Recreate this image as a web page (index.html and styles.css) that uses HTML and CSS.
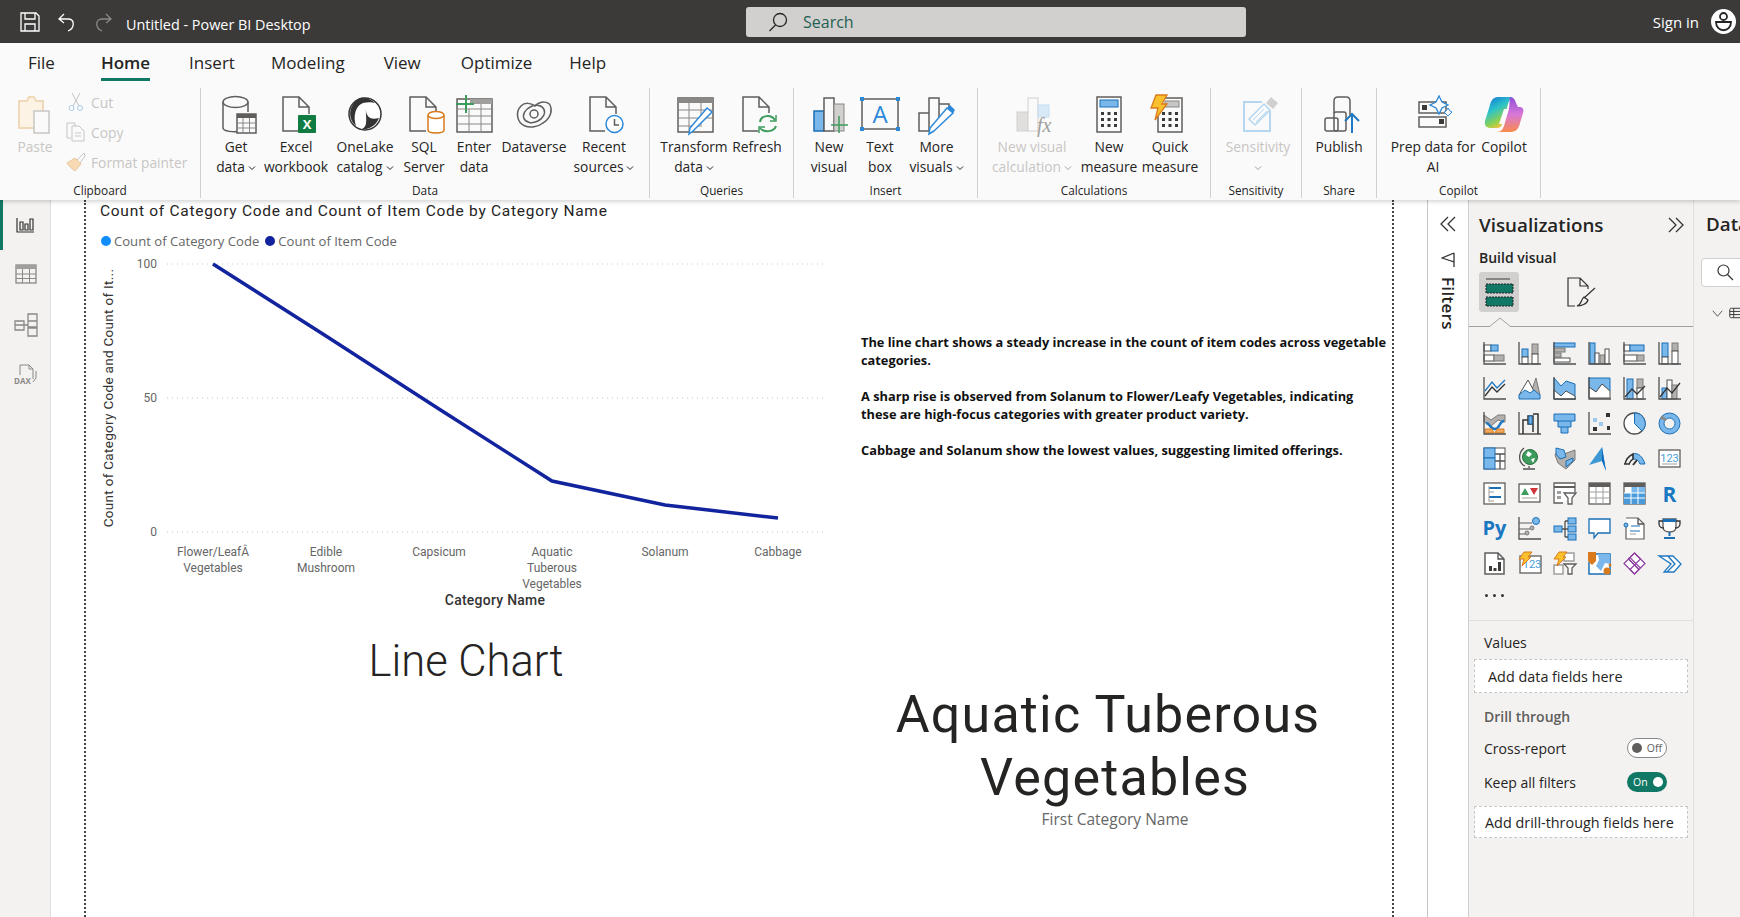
FILE: index.html
```html
<!DOCTYPE html>
<html lang="en">
<head>
    <meta charset="UTF-8">
    <title>Untitled - Power BI Desktop</title>
    <link rel="stylesheet" href="styles.css">
</head>
<body>
    <!-- Title bar -->
    <header class="titlebar">
        <div class="quick-tools">
            <svg class="qt" width="22" height="20" viewBox="0 0 22 20"><path class="tb" d="M2 1H17L20 4V19H2ZM6 1V7H16V1M6 19V12H16V19"/></svg>
            <svg class="qt" width="20" height="20" viewBox="0 0 20 20"><path class="tb" d="M7 2L2 7L7 11M2 7H11C18 7 18 16 11 19"/></svg>
            <svg class="qt dim" width="20" height="20" viewBox="0 0 20 20"><path class="tb" d="M13 2L18 7L13 11M18 7H9C2 7 2 16 9 19"/></svg>
            <span class="doc-title">Untitled - Power BI Desktop</span>
        </div>
        <div class="search-box">
            <svg width="20" height="20" viewBox="0 0 20 20"><circle class="tk" cx="12" cy="8" r="6.5"/><path class="tk" d="M7.5 13L1.5 19"/></svg>
            <span>Search</span>
        </div>
        <div class="account">
            <span>Sign in</span>
            <svg width="25" height="25" viewBox="0 0 25 25"><circle cx="12.500" cy="12.500" r="12.500" fill="#fff"/><circle class="av" cx="12.500" cy="7.500" r="3.500"/><path class="av" d="M5 13H20C20 24 5 24 5 13Z"/></svg>
        </div>
    </header>

    <!-- Ribbon -->
    <section class="ribbon">
        <nav class="tabs">
            <span class="tab tab-file">File</span>
            <span class="tab tab-home active">Home</span>
            <span class="tab tab-insert">Insert</span>
            <span class="tab tab-modeling">Modeling</span>
            <span class="tab tab-view">View</span>
            <span class="tab tab-optimize">Optimize</span>
            <span class="tab tab-help">Help</span>
        </nav>
        <div class="groups">
            <div class="group g-clipboard">
                <div class="items">
                    <div class="item disabled">
                        <svg class="rb" viewBox="0 0 44 40"><path d="M6 6H14L16 2H21L23 6H30V33H6Z" fill="#fdf3e4" stroke="#f0d9b8" stroke-width="2"/><rect x="21" y="16" width="15" height="22" fill="#fafafa" stroke="#c8c6c4" stroke-width="1.500"/></svg>
                        <span class="lbl">Paste</span>
                    </div>
                    <div class="small-col">
                        <div class="small"><svg width="18" height="20" viewBox="0 0 18 20"><path d="M5 1L12 14M13 1L6 14" stroke="#c8c6c4" fill="none"/><circle cx="4.500" cy="16" r="2.500" fill="none" stroke="#a9cce8"/><circle cx="13" cy="16" r="2.500" fill="none" stroke="#a9cce8"/></svg><span>Cut</span></div>
                        <div class="small"><svg width="20" height="20" viewBox="0 0 20 20"><path d="M1 1H9V4M1 1V16H5" stroke="#c8c6c4" fill="none"/><path d="M6 4H13L18 9V19H6Z" stroke="#c8c6c4" fill="#fafafa"/><path d="M9 11H15M9 14H15" stroke="#c8c6c4"/></svg><span>Copy</span></div>
                        <div class="small"><svg width="20" height="20" viewBox="0 0 20 20"><path d="M18 1L11 8L14 11L19 4Z" fill="none" stroke="#c8c6c4"/><path d="M9 6L15 12L9 19C6 17 3 14 1 11Z" fill="#f7d9b4" stroke="#e8c79c"/></svg><span>Format painter</span></div>
                    </div>
                </div>
                <div class="group-name">Clipboard</div>
            </div>

            <div class="group g-data">
                <div class="items">
                    <div class="item">
                        <svg class="rb" viewBox="0 0 44 40"><path class="ln" d="M9 7V33C9 36 20 38 26 36M34 7V17"/><ellipse class="ln" cx="21.500" cy="7" rx="12.500" ry="5.500"/><rect class="ln wf" x="23" y="19" width="19" height="19"/><rect x="23" y="19" width="19" height="4" fill="#605e5c"/><path class="th" d="M23 28H42M23 33H42M29 23V38M35.500 23V38"/></svg>
                        <span class="lbl">Get<br>data<svg class="caret" viewBox="0 0 8 8"><path d="M1 2.500L4 5.500L7 2.500"/></svg></span>
                    </div>
                    <div class="item">
                        <svg class="rb" viewBox="0 0 44 40"><path class="ln" d="M26 36H9V2H25L35 12V19M25 2V12H35"/><rect x="24" y="20" width="18" height="18" rx="1" fill="#107c41"/><text class="xl" x="33" y="34" text-anchor="middle">X</text></svg>
                        <span class="lbl">Excel<br>workbook</span>
                    </div>
                    <div class="item">
                        <svg class="rb" viewBox="0 0 44 40"><circle cx="22" cy="19" r="16" fill="#fff" stroke="#333" stroke-width="1.500"/><path d="M17 3C7 8 3 22 13 31C10 22 12 11 20 8C24 7 29 7 32 8C28 4 22 2 17 3Z" fill="#333"/><path d="M23 11C22 19 25 26 36 23C33 31 25 35 19 34C26 31 22 20 23 11Z" fill="#333"/></svg>
                        <span class="lbl">OneLake<br>catalog<svg class="caret" viewBox="0 0 8 8"><path d="M1 2.500L4 5.500L7 2.500"/></svg></span>
                    </div>
                    <div class="item">
                        <svg class="rb" viewBox="0 0 44 40"><path class="ln" d="M24 36H8V2H24L34 12V16M24 2V12H34"/><path d="M26 20V35C26 39 42 39 42 35V20" fill="#fff" stroke="#d97b1c" stroke-width="1.500"/><ellipse cx="34" cy="20" rx="8" ry="3.500" fill="#fff" stroke="#d97b1c" stroke-width="1.500"/></svg>
                        <span class="lbl">SQL<br>Server</span>
                    </div>
                    <div class="item">
                        <svg class="rb" viewBox="0 0 44 40"><rect class="ln" x="5" y="4" width="35" height="33"/><rect x="18" y="4" width="22" height="5" fill="#a19f9d"/><path class="th" d="M5 14H40M5 21H40M5 29H40M17 14V37M29 9V37"/><path d="M14 0V18M4 9H22" stroke="#3d9c5d" stroke-width="2"/></svg>
                        <span class="lbl">Enter<br>data</span>
                    </div>
                    <div class="item">
                        <svg class="rb" viewBox="0 0 44 40"><path class="ln" d="M13 31C5 28 3 17 9 11C13 7 19 8 23 11C28 6 38 5 39 13C40 20 35 26 31 28C26 32 18 33 13 31Z"/><ellipse class="ln" cx="22" cy="19" rx="11" ry="8" transform="rotate(-25 22 19)"/><circle class="ln" cx="22" cy="19" r="4"/></svg>
                        <span class="lbl">Dataverse</span>
                    </div>
                    <div class="item">
                        <svg class="rb" viewBox="0 0 44 40"><path class="ln" d="M23 36H8V2H24L34 12V19M24 2V12H34"/><circle cx="32.500" cy="29" r="8.500" fill="#fff" stroke="#2b88d8" stroke-width="1.500"/><path class="ln" d="M32.500 24V30H37"/></svg>
                        <span class="lbl">Recent<br>sources<svg class="caret" viewBox="0 0 8 8"><path d="M1 2.500L4 5.500L7 2.500"/></svg></span>
                    </div>
                </div>
                <div class="group-name">Data</div>
            </div>

            <div class="group g-queries">
                <div class="items">
                    <div class="item">
                        <svg class="rb" viewBox="0 0 44 40"><rect class="ln" x="6" y="3" width="35" height="34"/><rect x="6" y="3" width="35" height="5" fill="#8a8886"/><path class="th" d="M6 15H41M6 23H41M6 31H30M17 8V37M29 8V30"/><path d="M21 36L17 39L18 33L35 13L40 17Z" fill="#fff" stroke="#2b88d8" stroke-width="1.500"/></svg>
                        <span class="lbl">Transform<br>data<svg class="caret" viewBox="0 0 8 8"><path d="M1 2.500L4 5.500L7 2.500"/></svg></span>
                    </div>
                    <div class="item">
                        <svg class="rb" viewBox="0 0 44 40"><path class="ln" d="M23 36H8V2H24L34 12V18M24 2V12H34"/><path d="M25 27C26 20 36 19 40 25M41 31C39 37 29 38 25 33" fill="none" stroke="#3d9c5d" stroke-width="2"/><path d="M41 20V26H35M24 38V32H30" fill="none" stroke="#3d9c5d" stroke-width="1.500"/></svg>
                        <span class="lbl">Refresh</span>
                    </div>
                </div>
                <div class="group-name">Queries</div>
            </div>

            <div class="group g-insert">
                <div class="items">
                    <div class="item">
                        <svg class="rb" viewBox="0 0 44 40"><rect x="7" y="16" width="10" height="20" fill="#7ab8ec" stroke="#1a6fb5" stroke-width="1.500"/><rect class="ln wf" x="17" y="3" width="10" height="33"/><rect x="27" y="9" width="10" height="27" fill="#d2d0ce" stroke="#8a8886"/><path d="M32 21V38M24 30H41" stroke="#3d9c5d" stroke-width="1.500"/></svg>
                        <span class="lbl">New<br>visual</span>
                    </div>
                    <div class="item">
                        <svg class="rb" viewBox="0 0 44 40"><rect class="ln" x="4" y="4" width="36" height="30"/><path d="M2 2H6V6H2ZM38 2H42V6H38ZM2 32H6V36H2ZM38 32H42V36H38Z" fill="#2b88d8"/><text class="a-glyph" x="22" y="28" text-anchor="middle">A</text></svg>
                        <span class="lbl">Text<br>box</span>
                    </div>
                    <div class="item">
                        <svg class="rb" viewBox="0 0 44 40"><path class="ln" d="M14 36H4V18H14ZM14 36V3H24V25M24 9H34V20"/><path d="M19 36L14 39L15 33L32 13L38 18Z" fill="#fff" stroke="#2b88d8" stroke-width="1.500"/><path d="M32 13L38 18L40 15L35 10Z" fill="#2b88d8"/></svg>
                        <span class="lbl">More<br>visuals<svg class="caret" viewBox="0 0 8 8"><path d="M1 2.500L4 5.500L7 2.500"/></svg></span>
                    </div>
                </div>
                <div class="group-name">Insert</div>
            </div>

            <div class="group g-calc">
                <div class="items">
                    <div class="item disabled">
                        <svg class="rb" viewBox="0 0 44 40"><rect x="7" y="17" width="11" height="19" fill="#e1dfdd" stroke="#d2d0ce"/><rect x="18" y="3" width="10" height="33" fill="#fafafa" stroke="#d2d0ce"/><rect x="28" y="10" width="11" height="12" fill="#d8e9f7" stroke="#c4dcf0"/><text class="fx" x="27" y="37">fx</text></svg>
                        <span class="lbl">New visual<br>calculation<svg class="caret" viewBox="0 0 8 8"><path d="M1 2.500L4 5.500L7 2.500"/></svg></span>
                    </div>
                    <div class="item">
                        <svg class="rb" viewBox="0 0 44 40"><rect class="ln wf" x="10" y="2" width="24" height="35"/><rect x="13" y="5" width="18" height="7" fill="#7ab8ec" stroke="#1a6fb5"/><path d="M14 17h3v3h-3zM20.500 17h3v3h-3zM27 17h3v3h-3zM14 23h3v3h-3zM20.500 23h3v3h-3zM27 23h3v3h-3zM14 29h3v3h-3zM20.500 29h3v3h-3zM27 29h3v3h-3z" fill="#3b3a39"/></svg>
                        <span class="lbl">New<br>measure</span>
                    </div>
                    <div class="item">
                        <svg class="rb" viewBox="0 0 44 40"><rect class="ln wf" x="10" y="3" width="24" height="34"/><rect x="17" y="6" width="14" height="6" fill="#c8c6c4" stroke="#8a8886"/><path d="M14 17h3v3h-3zM20.500 17h3v3h-3zM27 17h3v3h-3zM14 23h3v3h-3zM20.500 23h3v3h-3zM27 23h3v3h-3zM14 29h3v3h-3zM20.500 29h3v3h-3zM27 29h3v3h-3z" fill="#3b3a39"/><path d="M8 0H19L14 9H19L7 25L10 13H3Z" fill="#fbc02d" stroke="#d97b1c" stroke-width="1.300"/></svg>
                        <span class="lbl">Quick<br>measure</span>
                    </div>
                </div>
                <div class="group-name">Calculations</div>
            </div>

            <div class="group g-sens">
                <div class="items">
                    <div class="item disabled">
                        <svg class="rb" viewBox="0 0 44 40"><path d="M26 7H8V36H34V16" fill="#fafafa" stroke="#b5d6ef" stroke-width="2"/><path d="M13 24L28 9L34 15L19 30Z" fill="#fafafa" stroke="#b5d6ef" stroke-width="1.500"/><path d="M17 25L28 14M20 27L31 16" stroke="#b5d6ef"/><path d="M30 8L35 2L42 8L37 14Z" fill="#d2d0ce"/></svg>
                        <span class="lbl">Sensitivity<br><svg class="caret solo" viewBox="0 0 8 8"><path d="M1 2.500L4 5.500L7 2.500"/></svg></span>
                    </div>
                </div>
                <div class="group-name">Sensitivity</div>
            </div>

            <div class="group g-share">
                <div class="items">
                    <div class="item">
                        <svg class="rb" viewBox="0 0 44 40"><path class="ln" d="M17 18V6C17 3 19 2 21 2H29C31 2 33 3 33 6V20" stroke-width="2"/><rect class="ln" x="8" y="23" width="13" height="13" rx="2" stroke-width="2"/><rect class="ln" x="17" y="17" width="12" height="19" rx="2" stroke-width="2" fill="#fafafa"/><path d="M35 38V19M28 26L35 19L42 26" fill="none" stroke="#1f78c1" stroke-width="2"/></svg>
                        <span class="lbl">Publish</span>
                    </div>
                </div>
                <div class="group-name">Share</div>
            </div>

            <div class="group g-copilot">
                <div class="items">
                    <div class="item">
                        <svg class="rb" viewBox="0 0 44 40"><rect class="ln" x="8" y="7" width="27" height="11"/><rect x="11" y="10" width="5" height="5" fill="#3b3a39"/><rect class="ln" x="8" y="22" width="27" height="10" stroke-width="1.500"/><rect x="28" y="24" width="5" height="5" fill="#3b3a39"/><path d="M28 1L31 7L37 10L31 13L28 19L25 13L19 10L25 7Z" fill="#fafafa" stroke="#2b88d8" stroke-width="1.300"/><path d="M37 13L39 16L41 17L39 19L37 21L35 19L33 17L35 16Z" fill="#fafafa" stroke="#2b88d8"/></svg>
                        <span class="lbl">Prep data for<br>AI</span>
                    </div>
                    <div class="item">
                        <svg class="rb copilot" viewBox="0 0 44 40">
                            <defs>
                                <linearGradient id="cpA" x1="0" y1="0" x2="0.500" y2="1"><stop offset="0" stop-color="#0f6cd8"/><stop offset="0.450" stop-color="#2cc3c9"/><stop offset="0.800" stop-color="#8fd14f"/><stop offset="1" stop-color="#f5c43c"/></linearGradient>
                                <linearGradient id="cpB" x1="0.500" y1="0" x2="0.500" y2="1"><stop offset="0" stop-color="#8f4fd8"/><stop offset="0.500" stop-color="#d878d8"/><stop offset="1" stop-color="#f98a4b"/></linearGradient>
                            </defs>
                            <path d="M27 2H16C11 2 9 6 8 10L3 26C2 31 5 33 9 33H15C19 33 20 30 21 27L26 9C27 6 28 3 31 2Z" fill="url(#cpA)"/>
                            <path d="M28 2C31 2 33 4 34 8L36 12H38C41 12 42 15 41 18L38 28C37 33 34 37 29 37H15C19 37 21 34 22 31L27 13C28 9 27 5 28 2Z" fill="url(#cpB)"/>
                            <path d="M22 14H27L22 29H17Z" fill="#fafafa"/>
                        </svg>
                        <span class="lbl">Copilot</span>
                    </div>
                </div>
                <div class="group-name">Copilot</div>
            </div>
        </div>
    </section>

    <main class="workspace">
        <!-- Page view switcher -->
        <aside class="sidenav">
            <div class="nav-item active">
                <svg width="18" height="16" viewBox="0 0 18 16"><path class="k" d="M1 1V15H18M4 5H7V13H4ZM9 7H12V13H9ZM14 2H17V13H14Z" stroke-width="1.200"/></svg>
            </div>
            <div class="nav-item">
                <svg width="22" height="20" viewBox="0 0 22 20"><rect x="1" y="1" width="20" height="18" fill="none" stroke="#8a8886" stroke-width="1.300"/><rect x="1" y="1" width="20" height="4" fill="#a19f9d"/><path d="M1 10H21M1 14.500H21M7.500 5V19M14.500 5V19" stroke="#8a8886"/></svg>
            </div>
            <div class="nav-item">
                <svg width="24" height="24" viewBox="0 0 24 24"><path d="M1 8H10V17H1ZM14 1H23V8H14ZM14 8H23V14H14ZM14 15H23V23H14ZM10 12H14M1 12H10" fill="none" stroke="#8a8886" stroke-width="1.300"/></svg>
            </div>
            <div class="nav-item">
                <svg width="24" height="24" viewBox="0 0 24 24"><path d="M6 12V2H15L19 6V16M15 2V6H19M19 19L22 15V8" fill="none" stroke="#8a8886"/><text class="dax" x="0" y="21">DAX</text></svg>
            </div>
        </aside>

        <!-- Report canvas: visuals sit at free positions on the page -->
        <div class="canvas">
            <div class="page">
                <div class="visual chart">
                    <div class="chart-title">Count of Category Code and Count of Item Code by Category Name</div>
                    <div class="legend">
                        <span class="dot dot-a"></span><span class="legend-text">Count of Category Code</span>
                        <span class="dot dot-b"></span><span class="legend-text">Count of Item Code</span>
                    </div>
                    <svg class="plot" width="760" height="360" viewBox="0 0 760 360">
                        <path class="grid" d="M67 13H724M67 147H724M67 281H724"/>
                        <text class="tick" x="57" y="17" text-anchor="end">100</text>
                        <text class="tick" x="57" y="151" text-anchor="end">50</text>
                        <text class="tick" x="57" y="285" text-anchor="end">0</text>
                        <text class="axis-y" transform="translate(13 147) rotate(-90)" text-anchor="middle">Count of Category Code and Count of It...</text>
                        <polyline class="series" points="113,13 226,85 339,158 452,230 565,254 678,267"/>
                        <text class="tick" text-anchor="middle" x="113" y="305">Flower/LeafÂ</text>
                        <text class="tick" text-anchor="middle" x="113" y="321">Vegetables</text>
                        <text class="tick" text-anchor="middle" x="226" y="305">Edible</text>
                        <text class="tick" text-anchor="middle" x="226" y="321">Mushroom</text>
                        <text class="tick" text-anchor="middle" x="339" y="305">Capsicum</text>
                        <text class="tick" text-anchor="middle" x="452" y="305">Aquatic</text>
                        <text class="tick" text-anchor="middle" x="452" y="321">Tuberous</text>
                        <text class="tick" text-anchor="middle" x="452" y="337">Vegetables</text>
                        <text class="tick" text-anchor="middle" x="565" y="305">Solanum</text>
                        <text class="tick" text-anchor="middle" x="678" y="305">Cabbage</text>
                        <text class="axis-x" text-anchor="middle" x="395" y="354">Category Name</text>
                    </svg>
                </div>

                <div class="visual narrative">
                    <p>The line chart shows a steady increase in the count of item codes across vegetable<br>categories.</p>
                    <p>A sharp rise is observed from Solanum to Flower/Leafy Vegetables, indicating<br>these are high-focus categories with greater product variety.</p>
                    <p>Cabbage and Solanum show the lowest values, suggesting limited offerings.</p>
                </div>

                <div class="visual heading">Line Chart</div>

                <div class="visual card">
                    <div class="card-value"><span class="card-first">Aquatic Tuberous</span><br>Vegetables</div>
                    <div class="card-label">First Category Name</div>
                </div>
            </div>
        </div>

        <!-- Filters -->
        <aside class="filters">
            <svg width="16" height="16" viewBox="0 0 16 16"><path class="k" d="M8 1L1 8L8 15M15 1L8 8L15 15" stroke-width="1.300"/></svg>
            <svg class="filter-icon" width="14" height="16" viewBox="0 0 14 16"><path class="k" d="M13 1V15V10L1 6L13 1" stroke-width="1.300"/></svg>
            <span class="filters-text">Filters</span>
        </aside>

        <!-- Visualizations pane -->
        <aside class="viz">
            <div class="viz-head">
                <h2>Visualizations</h2>
                <svg width="16" height="16" viewBox="0 0 16 16"><path class="k" d="M1 1L8 8L1 15M8 1L15 8L8 15" stroke-width="1.300"/></svg>
            </div>
            <div class="build">Build visual</div>
            <div class="viz-tabs">
                <div class="viz-tab selected">
                    <svg width="30" height="30" viewBox="0 0 30 30"><path d="M2 2H26" stroke="#3b3a39"/><rect x="2" y="7" width="27" height="9" fill="#117865" stroke="#222" stroke-dasharray="2 1"/><rect x="2" y="20" width="27" height="9" fill="#117865" stroke="#222" stroke-dasharray="2 1"/></svg>
                </div>
                <div class="viz-tab format">
                    <svg width="32" height="32" viewBox="0 0 32 32"><path class="k" d="M9 30H2V2H14L22 10V13M14 2V10H22" stroke-width="1.200"/><path class="k" d="M29 12L18 22M11 30C15 30 21 28 22 24L18 21C15 23 16 28 11 30Z" stroke-width="1.200"/></svg>
                </div>
            </div>
            <div class="viz-rule"><svg width="22" height="10" viewBox="0 0 22 10"><path d="M0 10L11 1L22 10" fill="#f3f2f1" stroke="#a19f9d"/></svg></div>

            <div class="viz-grid">
                <svg viewBox="0 0 23 23"><rect class="w" x="1" y="3" width="7" height="6"/><rect class="b" x="8" y="3" width="7" height="6"/><rect class="w" x="1" y="13" width="10" height="6"/><rect class="g" x="11" y="13" width="10" height="6"/><path class="ax" d="M1 0V22H23"/></svg>
                <svg viewBox="0 0 23 23"><rect class="b" x="4" y="7" width="6" height="8"/><rect class="w" x="4" y="15" width="6" height="7"/><rect class="g" x="14" y="2" width="6" height="10"/><rect class="w" x="14" y="12" width="6" height="10"/><path class="ax" d="M1 0V22H23"/></svg>
                <svg viewBox="0 0 23 23"><rect class="b" x="1" y="1" width="21" height="4"/><rect class="g" x="1" y="6" width="11" height="4"/><rect class="g" x="1" y="11" width="7" height="4"/><rect class="w" x="1" y="16" width="16" height="4"/><path class="ax" d="M1 0V22H23"/></svg>
                <svg viewBox="0 0 23 23"><rect class="b" x="2" y="1" width="5" height="21"/><rect class="w" x="7" y="11" width="4" height="11"/><rect class="g" x="12" y="13" width="5" height="9"/><rect class="w" x="17" y="7" width="4" height="15"/><path class="ax" d="M1 0V22H23"/></svg>
                <svg viewBox="0 0 23 23"><rect class="w" x="1" y="3" width="6" height="6"/><rect class="b" x="7" y="3" width="14" height="6"/><rect class="w" x="1" y="13" width="13" height="6"/><rect class="g" x="14" y="13" width="7" height="6"/><path class="ax" d="M1 0V22H23"/></svg>
                <svg viewBox="0 0 23 23"><rect class="b" x="4" y="1" width="6" height="14"/><rect class="w" x="4" y="15" width="6" height="7"/><rect class="g" x="14" y="1" width="6" height="8"/><rect class="w" x="14" y="9" width="6" height="13"/><path class="ax" d="M1 0V22H23"/></svg>

                <svg viewBox="0 0 23 23"><path class="ax" d="M1 0V22H23"/><path class="sb" d="M2 14L9 5L14 11L22 3"/><path class="ln1" d="M2 19L9 10L14 15L22 7"/></svg>
                <svg viewBox="0 0 23 23"><path class="g" d="M12 18L18 1L22 18Z"/><path class="w" d="M1 18L10 3L18 18Z"/><path class="b" d="M1 18L7 13L12 16L16 13L22 18V22H1Z"/></svg>
                <svg viewBox="0 0 23 23"><path class="b" d="M1 1L8 9L13 4L22 7V22H1Z"/><path class="w" d="M1 13L8 19L13 14L22 19V22H1Z"/><path class="ax" d="M1 0V22H23"/></svg>
                <svg viewBox="0 0 23 23"><path class="b" d="M1 1H22V14L14 7L8 15L1 10Z"/><path class="w" d="M1 10L8 15L14 7L22 14V21H1Z"/><path class="ax" d="M1 0V22H23"/></svg>
                <svg viewBox="0 0 23 23"><rect class="b" x="4" y="2" width="6" height="20"/><rect class="g" x="14" y="2" width="6" height="9"/><rect class="w" x="14" y="11" width="6" height="11"/><path class="ax" d="M1 0V22H23"/><path class="ln1" d="M2 20L9 12L14 17L22 9"/></svg>
                <svg viewBox="0 0 23 23"><rect class="b" x="4" y="11" width="5" height="11"/><rect class="w" x="9" y="3" width="5" height="19"/><rect class="g" x="14" y="8" width="5" height="14"/><path class="ax" d="M1 0V22H23"/><path class="ln1" d="M2 20L9 11L14 16L22 6"/></svg>

                <svg viewBox="0 0 23 23"><path class="g" d="M1 3L8 8L15 3L22 3V10L15 8L8 14L1 10Z"/><path class="sb2" d="M3 11C7 11 7 17 12 17C17 17 16 9 21 9"/><path d="M2 17H9L11 21H2ZM14 17H21V21H12Z" fill="#f0a860" stroke="#d97b1c"/><path class="ax" d="M1 0V22H23"/></svg>
                <svg viewBox="0 0 23 23"><path class="ax" d="M1 0V22H23"/><path class="k" d="M5 22V8H10V4H15V20M15 2H20V22M10 4V12H15" stroke-width="1.500"/><rect class="b" x="11" y="4" width="3" height="8"/></svg>
                <svg viewBox="0 0 23 23"><path class="b" d="M1 2H22V9H18V15H15V21H8V15H5V9H1Z"/><path d="M5 9H18M8 15H15" stroke="#1a6fb5"/></svg>
                <svg viewBox="0 0 23 23"><path class="ax" d="M1 0V22H23"/><rect class="lb" x="5" y="6" width="4" height="4"/><rect class="lb" x="11" y="10" width="4" height="4"/><path class="pt" d="M5 15h4v4H5zM18 1h4v4h-4zM19 14h3v4h-3z"/></svg>
                <svg viewBox="0 0 23 23"><circle class="w2" cx="11.500" cy="11.500" r="10.500"/><path class="b" d="M11.500 1A10.500 10.500 0 0 1 19 19L11.500 11.500Z"/></svg>
                <svg viewBox="0 0 23 23"><circle cx="11.500" cy="11.500" r="8" fill="none" stroke="#7ab8ec" stroke-width="5"/><circle cx="11.500" cy="11.500" r="10.500" fill="none" stroke="#1a6fb5"/><circle cx="11.500" cy="11.500" r="5.500" fill="none" stroke="#1a6fb5"/><path d="M3 5L8 8" stroke="#8a8886" stroke-width="3"/></svg>

                <svg viewBox="0 0 23 23"><rect class="w" x="1" y="1" width="21" height="21"/><rect class="b" x="1" y="1" width="11" height="10"/><rect class="b" x="1" y="11" width="11" height="11"/><path class="ax" d="M12 7H22M17 7V22M12 14H22" stroke-width="1"/></svg>
                <svg viewBox="0 0 23 23"><path d="M6 1C0 6 0 16 7 19" class="ax"/><circle cx="12" cy="10" r="7.500" fill="#3d9c5d" stroke="#2b6f43"/><path d="M10 4L14 7L11 10L8 8ZM13 12L17 11L15 16Z" fill="#fff"/><path class="ax" d="M11 19V21M5 22H17"/></svg>
                <svg viewBox="0 0 23 23"><path class="g" d="M4 4L11 7L22 3V13L13 22L5 16L2 8Z"/><path class="b" d="M3 1L11 3L13 10L7 12L3 7Z"/><path class="b" d="M13 14L20 11L20 14L13 20Z"/></svg>
                <svg viewBox="0 0 23 23"><path d="M14 0L1 18L14 14L18 24Z" fill="#3d97d3"/><path d="M14 0L18 24L14 14Z" fill="#0f6cbd"/></svg>
                <svg viewBox="0 0 23 23"><path class="b" d="M10 7C15 5 20 10 22 17H17C16 14 14 12 10 12Z"/><path class="k" d="M2 17C3 12 6 9 10 7V12C8 13 7 15 6 17ZM1 17H7" stroke-width="1.500"/><path class="k" d="M10 18L14 13" stroke-width="2"/></svg>
                <svg viewBox="0 0 23 23"><rect x="1" y="3" width="21" height="17" fill="#fff" stroke="#605e5c" stroke-width="1.300"/><text class="ic-num" x="11.500" y="15" text-anchor="middle">123</text><path d="M4 17H19" stroke="#a19f9d"/></svg>

                <svg viewBox="0 0 23 23"><rect x="1" y="1" width="21" height="21" fill="#fff" stroke="#605e5c" stroke-width="1.300"/><path d="M6 6H18M6 15H18" stroke="#1a6fb5" stroke-width="2"/><path d="M6 10H11M6 19H11M6 4V20" stroke="#a19f9d"/></svg>
                <svg viewBox="0 0 23 23"><rect x="1" y="2" width="21" height="18" fill="#fff" stroke="#605e5c" stroke-width="1.300"/><path d="M3 13L7 6L11 13Z" fill="#3d9c5d"/><path d="M12 6H20L16 13Z" fill="#d13438"/><path d="M4 16H19" stroke="#a19f9d"/></svg>
                <svg viewBox="0 0 23 23"><path d="M10 21H1V1H22V10" fill="#fff" stroke="#605e5c" stroke-width="1.300"/><path d="M1 5H22" stroke="#605e5c" stroke-width="2"/><path d="M4 9h4v3H4zM4 14h4v3H4z" fill="#a19f9d"/><path d="M11 11H23L19 16V22H15V16Z" fill="#fff" stroke="#605e5c" stroke-width="1.300"/></svg>
                <svg viewBox="0 0 23 23"><rect x="1" y="1" width="21" height="21" fill="#fff" stroke="#605e5c" stroke-width="1.300"/><rect x="1" y="1" width="21" height="4" fill="#605e5c"/><path d="M1 10H22M1 16H22M8 5V22M15 5V22" stroke="#a19f9d"/></svg>
                <svg viewBox="0 0 23 23"><rect x="1" y="1" width="21" height="21" fill="#fff" stroke="#605e5c" stroke-width="1.300"/><rect x="8" y="5" width="14" height="6" fill="#7ab8ec"/><rect x="15" y="11" width="7" height="11" fill="#4a9bdc"/><rect x="1" y="11" width="14" height="11" fill="#4a9bdc"/><rect x="1" y="1" width="21" height="4" fill="#605e5c"/><path d="M1 11H22M1 16H22M8 5V22M15 5V22" stroke="#fff"/></svg>
                <svg viewBox="0 0 23 23"><text class="ic-r" x="11.500" y="20" text-anchor="middle">R</text></svg>

                <svg viewBox="0 0 23 23"><text class="ic-py" x="11.500" y="18" text-anchor="middle">Py</text></svg>
                <svg viewBox="0 0 23 23"><path class="ax" d="M1 0V22H23"/><path d="M1 6H14M1 12H12M1 17H8" stroke="#605e5c"/><circle class="b" cx="18" cy="4" r="3.500"/><circle class="g" cx="14" cy="11" r="2"/><circle class="g" cx="9" cy="16" r="2"/></svg>
                <svg viewBox="0 0 23 23"><rect class="b" x="1" y="9" width="8" height="6"/><rect class="b" x="15" y="1" width="8" height="6"/><rect class="b" x="15" y="9" width="8" height="6"/><rect class="b" x="15" y="17" width="8" height="6"/><path class="ax" d="M9 12H15M12 4V20M12 4H15M12 20H15"/></svg>
                <svg viewBox="0 0 23 23"><path d="M1 2H22V16H10L6 21V16H1Z" fill="#fff" stroke="#1a6fb5" stroke-width="1.300"/></svg>
                <svg viewBox="0 0 23 23"><path d="M3 1H15L21 7V22H3V10" fill="#fff" stroke="#605e5c" stroke-width="1.200"/><path class="ax" d="M15 1V7H21"/><circle class="b" cx="3" cy="8" r="2"/><path d="M8 9H17M7 14H17" stroke="#1a6fb5"/><path d="M7 17H13" stroke="#a19f9d"/></svg>
                <svg viewBox="0 0 23 23"><path d="M5 2H18V10C18 14 14 15 11.500 15C9 15 5 14 5 10Z" fill="#fff" stroke="#605e5c" stroke-width="1.300"/><path d="M5 2H18V5H5Z" fill="#1a6fb5"/><path class="k" d="M5 4H1V7C1 10 4 11 6 11M18 4H22V7C22 10 19 11 17 11" stroke-width="1.300"/><path d="M11.500 15V19M6 21H17" stroke="#1a6fb5" stroke-width="2"/></svg>

                <svg viewBox="0 0 23 23"><path d="M2 1H15L21 7V22H2Z" fill="#fff" stroke="#605e5c" stroke-width="1.500"/><path class="ax" d="M15 1V7H21"/><path d="M6 14h3v5H6zM10.500 16h3v3h-3zM15 10h3v9h-3z" fill="#3b3a39"/></svg>
                <svg viewBox="0 0 23 23"><rect x="2" y="4" width="21" height="17" fill="#fff" stroke="#605e5c" stroke-width="1.300"/><text class="ic-num" x="14" y="16" text-anchor="middle">123</text><path d="M6 0H14L10 5H13L4 14L6 7H1Z" fill="#fbc02d" stroke="#d97b1c"/></svg>
                <svg viewBox="0 0 23 23"><rect x="11" y="1" width="10" height="8" fill="#fff" stroke="#a19f9d" stroke-width="1.500"/><rect x="1" y="13" width="9" height="9" fill="#fff" stroke="#a19f9d" stroke-width="1.500"/><path d="M6 0H14L10 5H13L4 14L6 7H1Z" fill="#fbc02d" stroke="#d97b1c"/><path d="M11 12H23L19 16V22H15V16Z" fill="#fff" stroke="#605e5c" stroke-width="1.300"/></svg>
                <svg viewBox="0 0 23 23"><path d="M4 2H22V22H1V10" fill="#fff" stroke="#1a6fb5" stroke-width="1.500"/><path d="M10 2H22V12L17 11L13 19L8 14L11 8Z" fill="#7ab8ec"/><path d="M0 0H8V9L4 13L0 9Z" fill="#d97b1c"/><circle cx="19" cy="19" r="3.500" fill="#d97b1c"/><circle cx="22" cy="13" r="1.500" fill="#d97b1c"/></svg>
                <svg viewBox="0 0 23 23"><path d="M11.500 1L22 11.500L16 17.500L5.500 7ZM11.500 22L1 11.500L7 5.500L17.500 16Z" fill="#fff" stroke="#8e3ea0" stroke-width="1.200"/><path d="M5.500 7L11.500 1L17.500 7L11.500 13ZM7 17.500L11.500 13L16 17.500L11.500 22Z" fill="none" stroke="#8e3ea0" stroke-width="1.200"/></svg>
                <svg viewBox="0 0 23 23"><path d="M1 4H15L23 12L16 20H6L13 12ZM9 20L17 12L10 4" fill="#fff" stroke="#1f78c1" stroke-width="1.300"/></svg>
            </div>
            <div class="more-dots"><span></span><span></span><span></span></div>

            <div class="fields">
                <div class="field-label">Values</div>
                <div class="well">Add data fields here</div>
                <div class="drill">Drill through</div>
                <div class="toggle-row first"><span>Cross-report</span><span class="toggle off"><i></i>Off</span></div>
                <div class="toggle-row"><span>Keep all filters</span><span class="toggle on">On<i></i></span></div>
                <div class="well well-drill">Add drill-through fields here</div>
            </div>
        </aside>

        <!-- Data pane, cut off by the window -->
        <aside class="data">
            <h2>Data</h2>
            <div class="data-search">
                <svg width="18" height="18" viewBox="0 0 18 18"><circle class="k" cx="7.500" cy="7.500" r="5.500" stroke-width="1.200"/><path class="k" d="M11.500 11.500L17 17" stroke-width="1.200"/></svg>
            </div>
            <div class="tree">
                <svg width="14" height="9" viewBox="0 0 14 9"><path class="k" d="M1 1L7 8L13 1"/></svg>
                <svg width="14" height="14" viewBox="0 0 14 14"><path class="k" d="M14 1H3C1 1 1 2 1 3V11C1 12 1 13 3 13H14M1 5H14M1 9H14M6 1V13" stroke-width="1.200"/></svg>
            </div>
        </aside>
    </main>
</body>
</html>
```

FILE: styles.css
```css
html, body {
    margin: 0;
    height: 917px;
    overflow: hidden;
}

body {
    font-family: 'Open Sans', 'Liberation Sans', sans-serif;
    color: #252423;
    display: flex;
    flex-direction: column;
    background-color: #f3f2f1;
}

/* Title bar */
.titlebar {
    height: 43px;
    background-color: #3b3a39;
    color: white;
    display: flex;
    align-items: center;
    flex-shrink: 0;
    position: relative;
}

.quick-tools {
    display: flex;
    align-items: center;
    width: 746px;
    padding-left: 19px;
    box-sizing: border-box;
}

.qt {
    margin-right: 16px;
}

.qt.dim {
    opacity: 0.4;
    margin-right: 13px;
}

.tb {
    fill: none;
    stroke: white;
    stroke-width: 1.300;
}

.doc-title {
    font-size: 14.400px;
    margin-top: 6px;
}

.search-box {
    width: 500px;
    height: 30px;
    background-color: #d2d0ce;
    border-radius: 3px;
    display: flex;
    align-items: center;
    padding-left: 22px;
    box-sizing: border-box;
    gap: 15px;
    color: #1e5f54;
    font-size: 16px;
}

.tk {
    fill: none;
    stroke: #252423;
    stroke-width: 1.300;
}

.account {
    margin-left: auto;
    display: flex;
    align-items: center;
    gap: 12px;
    padding-right: 4px;
    font-size: 15px;
}

.av {
    fill: none;
    stroke: #252423;
    stroke-width: 1.800;
}

/* Ribbon */
.ribbon {
    height: 157px;
    background-color: #fafafa;
    flex-shrink: 0;
    position: relative;
    z-index: 2;
    box-shadow: 0 2px 4px rgba(0, 0, 0, 0.16);
}

.tabs {
    height: 45px;
    display: flex;
    align-items: flex-start;
    font-size: 17px;
    line-height: 24px;
    position: relative;
}

.tab {
    position: relative;
    margin-top: 8px;
    color: #252423;
}

.tab-file { margin-left: 28px; }
.tab-home { margin-left: 46px; }
.tab-insert { margin-left: 39px; }
.tab-modeling { margin-left: 36px; }
.tab-view { margin-left: 39px; }
.tab-optimize { margin-left: 40px; }
.tab-help { margin-left: 37px; }

.tab.active {
    font-weight: 600;
}

.tab.active::after {
    content: "";
    position: absolute;
    left: 0;
    right: 0;
    bottom: -6px;
    height: 3px;
    background-color: #117865;
}

.groups {
    display: flex;
    height: 110px;
}

.group {
    display: flex;
    flex-direction: column;
    border-right: 1px solid #d2d0ce;
    box-sizing: border-box;
    flex-shrink: 0;
}

.items {
    display: grid;
    height: 95px;
    padding-top: 7px;
    padding-left: 5px;
    box-sizing: border-box;
}

.g-clipboard { width: 201px; }
.g-clipboard .items { grid-template-columns: 60px 1fr; padding-left: 5px; }
.g-data { width: 449px; }
.g-data .items { grid-template-columns: 60px 60px 78px 40px 60px 60px 80px; }
.g-queries { width: 144px; }
.g-queries .items { grid-template-columns: 78px 48px; }
.g-insert { width: 184px; }
.g-insert .items { grid-template-columns: 60px 42px 71px; }
.g-calc { width: 233px; }
.g-calc .items { grid-template-columns: 98px 56px 66px; }
.g-sens { width: 91px; }
.g-sens .items { grid-template-columns: 84px; }
.g-share { width: 75px; }
.g-share .items { grid-template-columns: 64px; }
.g-copilot { width: 164px; }
.g-copilot .items { grid-template-columns: 102px 40px; }

.item {
    display: flex;
    flex-direction: column;
    align-items: center;
    min-width: 0;
}

.rb {
    width: 44px;
    height: 40px;
    flex-shrink: 0;
    overflow: visible;
}

.ln {
    fill: none;
    stroke: #605e5c;
    stroke-width: 1.500;
}

.wf {
    fill: #fafafa;
}

.th {
    fill: none;
    stroke: #8a8886;
    stroke-width: 1;
}

.xl {
    font: bold 13px 'Open Sans', sans-serif;
    fill: white;
}

.a-glyph {
    font: 24px 'Open Sans', sans-serif;
    fill: #2b88d8;
}

.fx {
    font: italic 20px 'Liberation Serif', serif;
    fill: #a19f9d;
}

.lbl {
    margin-top: 2px;
    font-size: 13.800px;
    line-height: 20px;
    text-align: center;
    white-space: nowrap;
    color: #252423;
}

.disabled .lbl {
    color: #c8c6c4;
}

.caret {
    width: 8px;
    height: 8px;
    margin-left: 3px;
    fill: none;
    stroke: #252423;
}

.disabled .caret {
    stroke: #a19f9d;
}

.caret.solo {
    margin-left: 0;
}

.small-col {
    display: flex;
    flex-direction: column;
    margin-top: -8px;
}

.small {
    display: flex;
    align-items: center;
    height: 30px;
    margin-left: 1px;
    gap: 5px;
    font-size: 13.800px;
    color: #c8c6c4;
    white-space: nowrap;
}

.small svg {
    width: 20px;
    height: 20px;
    flex-shrink: 0;
}

.group-name {
    text-align: center;
    font-size: 11.800px;
    line-height: 16px;
    color: #252423;
}

/* Workspace */
.workspace {
    display: flex;
    flex: 1;
    min-height: 0;
}

.sidenav {
    width: 51px;
    flex-shrink: 0;
    background-color: #f3f2f1;
    border-right: 1px solid #e1dfdd;
    box-sizing: border-box;
    display: flex;
    flex-direction: column;
    align-items: center;
}

.nav-item {
    height: 50px;
    width: 100%;
    display: flex;
    align-items: center;
    justify-content: center;
    margin-left: 1px;
    box-sizing: border-box;
}

.nav-item:nth-child(2) {
    padding-bottom: 3px;
}

.nav-item.active {
    border-left: 3px solid #117865;
    margin-left: 0;
    padding-right: 3px;
}

.canvas {
    width: 1343px;
    flex-shrink: 0;
    background-color: white;
    border-right: 1px solid #c8c6c4;
    padding-left: 33px;
}

.page {
    position: relative;
    height: 100%;
    width: 1310px;
    border-left: 2px dotted #444;
    border-right: 2px dotted #444;
    box-sizing: border-box;
}

.visual {
    position: absolute;
}

.chart {
    left: 14px;
    top: 1px;
    width: 760px;
}

.chart-title {
    font-family: Roboto, sans-serif;
    font-size: 15.500px;
    font-weight: 400;
    line-height: 20px;
    letter-spacing: 0.720px;
    color: #252423;
    white-space: nowrap;
}

.legend {
    margin-top: 10px;
    height: 20px;
    display: flex;
    align-items: center;
    font-size: 13.100px;
    color: #666;
    white-space: nowrap;
}

.dot {
    width: 10px;
    height: 10px;
    border-radius: 50%;
    margin-right: 3px;
    margin-left: 1px;
}

.dot-a { background-color: #118dff; }
.dot-b { background-color: #12239e; margin-left: 6px; }

.plot {
    display: block;
}

.grid {
    stroke: #c8c6c4;
    stroke-dasharray: 1 4;
    fill: none;
}

.tick {
    font: 12px Roboto, sans-serif;
    fill: #666;
}

.axis-y {
    font: 13.500px Roboto, sans-serif;
    fill: #333;
    letter-spacing: 0.300px;
}

.axis-x {
    font: 500 13.900px Roboto, sans-serif;
    fill: #333;
    letter-spacing: 0.300px;
}

.series {
    fill: none;
    stroke: #12239e;
    stroke-width: 3.500;
}

.narrative {
    left: 775px;
    top: 133px;
    width: 540px;
    font-size: 12.800px;
    font-weight: 700;
    line-height: 18px;
    color: #111;
    white-space: nowrap;
}

.narrative p {
    margin: 0 0 18px;
}

.heading {
    left: 230px;
    top: 432px;
    width: 300px;
    text-align: center;
    font-family: Roboto, sans-serif;
    font-weight: 300;
    font-size: 43.500px;
    line-height: 60px;
    color: #252423;
}

.card {
    left: 729px;
    top: 483px;
    width: 600px;
    text-align: center;
}

.card-value {
    font-family: Roboto, sans-serif;
    font-size: 52px;
    letter-spacing: 1.200px;
    line-height: 63px;
    color: #252423;
}

/* the first line sits a little left of centre in the reference card */
.card-first {
    padding-right: 14px;
}

.card-label {
    margin-top: -1px;
    font-size: 15.500px;
    line-height: 22px;
    color: #666;
}

/* Filters */
.filters {
    width: 41px;
    flex-shrink: 0;
    background-color: white;
    border-right: 1px solid #d2d0ce;
    box-sizing: border-box;
    display: flex;
    flex-direction: column;
    align-items: center;
    padding-top: 16px;
}

.filter-icon {
    margin-top: 20px;
}

.filters-text {
    writing-mode: vertical-rl;
    margin-top: 9px;
    font-size: 17px;
    font-weight: 600;
    letter-spacing: 0.300px;
}

/* Visualizations */
.viz {
    width: 225px;
    flex-shrink: 0;
    background-color: #f3f2f1;
    border-right: 1px solid #e1dfdd;
    box-sizing: border-box;
    display: flex;
    flex-direction: column;
}

.viz-head {
    display: flex;
    align-items: center;
    justify-content: space-between;
    padding: 11px 9px 0 10px;
    height: 27px;
}

.viz h2, .data h2 {
    margin: 0;
    font-size: 18.800px;
    font-weight: 600;
    white-space: nowrap;
}

.build {
    margin: 11px 0 0 10px;
    font-size: 14px;
    font-weight: 600;
    line-height: 18px;
}

.viz-tabs {
    display: flex;
    margin: 5px 0 0 10px;
}

.viz-tab {
    width: 40px;
    height: 40px;
    display: flex;
    align-items: center;
    justify-content: center;
}

.viz-tab.selected {
    background-color: #d2d0ce;
    border-radius: 3px;
}

.viz-tab.format {
    margin-left: 43px;
}

.viz-rule {
    height: 15px;
    border-bottom: 1px solid #a19f9d;
    position: relative;
    box-sizing: border-box;
}

.viz-rule svg {
    position: absolute;
    left: 20px;
    bottom: -1px;
}

.viz-grid {
    display: grid;
    grid-template-columns: repeat(6, 35px);
    grid-auto-rows: 35px;
    margin: 9px 0 0 8px;
    justify-items: center;
    align-items: center;
}

.viz-grid svg {
    width: 23px;
    height: 23px;
    overflow: visible;
}

.ax { fill: none; stroke: #505050; stroke-width: 1.300; }
.k { fill: none; stroke: #333; }
.b { fill: #7ab8ec; stroke: #1a6fb5; }
.lb { fill: #9cc8ee; }
.g { fill: #b3b0ad; stroke: #7a7a7a; }
.w { fill: white; stroke: #505050; }
.w2 { fill: white; stroke: #505050; stroke-width: 1.300; }
.sb { fill: none; stroke: #1f78c1; stroke-width: 1.300; }
.sb2 { fill: none; stroke: #1f78c1; stroke-width: 2.500; }
.ln1 { fill: none; stroke: #333; stroke-width: 1.300; }
.pt { fill: #333; }

.ic-num {
    font: 11px Roboto, sans-serif;
    fill: #4a9bdc;
}

.ic-r {
    font: bold 21px 'Open Sans', sans-serif;
    fill: #1a78c2;
}

.ic-py {
    font: bold 20px 'Open Sans', sans-serif;
    fill: #1a78c2;
}

.dax {
    font: bold 8px 'Open Sans', sans-serif;
    fill: #8a8886;
}

.more-dots {
    display: flex;
    gap: 5px;
    margin: 13px 0 0 16px;
    height: 3px;
}

.more-dots span {
    width: 3px;
    height: 3px;
    background-color: #333;
    border-radius: 50%;
}

.fields {
    margin-top: 23px;
    border-top: 1px solid #e1dfdd;
    padding: 12px 5px 0 5px;
    font-size: 14px;
}

.field-label {
    padding-left: 10px;
    line-height: 20px;
}

.well {
    margin-top: 6px;
    height: 34px;
    background-color: white;
    border: 1px dashed #c8c6c4;
    box-sizing: border-box;
    display: flex;
    align-items: center;
    padding-left: 13px;
    white-space: nowrap;
    font-size: 14.400px;
}

.drill {
    margin-top: 14px;
    padding-left: 10px;
    line-height: 20px;
    font-weight: 600;
    color: #605e5c;
}

.toggle-row {
    display: flex;
    align-items: center;
    justify-content: space-between;
    height: 34px;
    padding: 0 21px 0 10px;
}

.toggle-row.first {
    margin-top: 4px;
}

.toggle {
    width: 40px;
    height: 20px;
    border-radius: 10px;
    box-sizing: border-box;
    display: flex;
    align-items: center;
    justify-content: space-between;
    padding: 0 4px;
    font-size: 10.500px;
}

.toggle i {
    width: 10px;
    height: 10px;
    border-radius: 50%;
}

.toggle.off {
    background-color: white;
    border: 1px solid #8a8886;
    color: #605e5c;
}

.toggle.off i {
    background-color: #605e5c;
}

.toggle.on {
    background-color: #117865;
    color: white;
    padding-left: 6px;
}

.toggle.on i {
    background-color: white;
}

.well-drill {
    margin-top: 7px;
    height: 32px;
    padding-left: 10px;
}

/* Data pane */
.data {
    flex: 1;
    min-width: 0;
    overflow: hidden;
    background-color: #f3f2f1;
    padding: 11px 0 0 12px;
}

.data h2 {
    line-height: 27px;
}

.data-search {
    margin: 20px 0 0 -5px;
    width: 80px;
    height: 29px;
    background-color: white;
    border: 1px solid #d2d0ce;
    border-radius: 4px;
    box-sizing: border-box;
    padding: 4px 0 0 14px;
}

.tree {
    margin: 19px 0 0 6px;
    display: flex;
    align-items: center;
    gap: 6px;
}
```
